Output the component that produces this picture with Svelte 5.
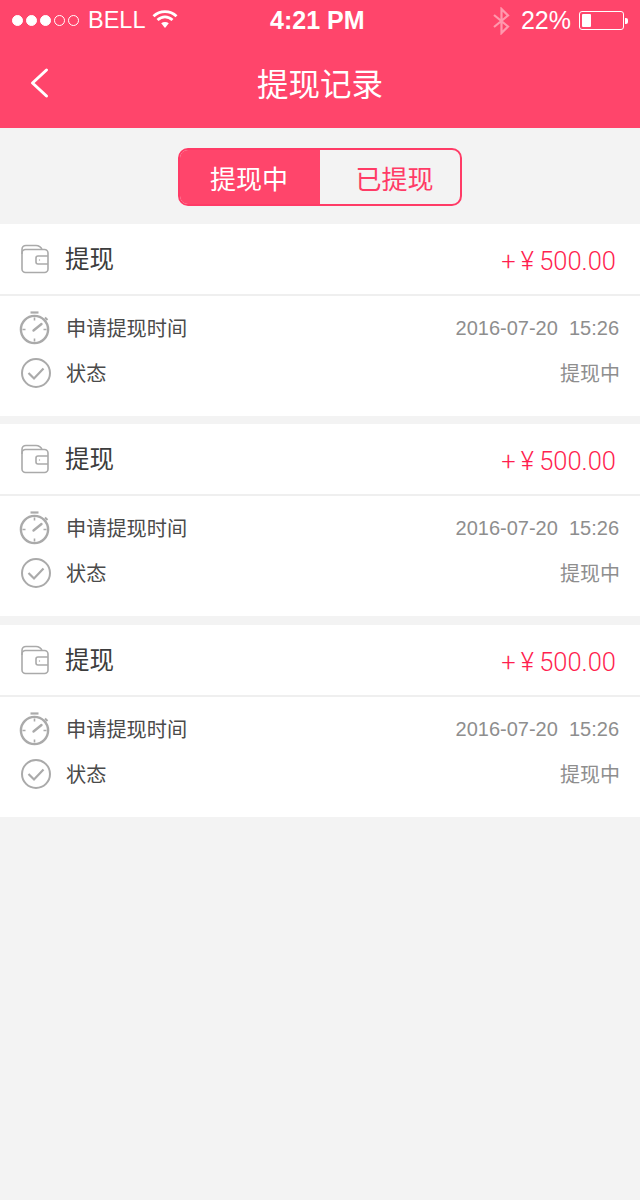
<script>
  const records = [
    { title: '提现', amount: '+ ¥ 500.00', time: '2016-07-20  15:26', status: '提现中' },
    { title: '提现', amount: '+ ¥ 500.00', time: '2016-07-20  15:26', status: '提现中' },
    { title: '提现', amount: '+ ¥ 500.00', time: '2016-07-20  15:26', status: '提现中' }
  ];
</script>

<div class="page">
  <header class="top">
    <div class="status">
      <div class="status-left">
        <span class="dots">
          <i class="on"></i><i class="on"></i><i class="on"></i><i></i><i></i>
        </span>
        <span class="carrier">BELL</span>
        <svg class="wifi" width="26" height="20" viewBox="0 0 26 20">
          <path d="M1.5 7.2C7.8 1 18.2 1 24.5 7.2" fill="none" stroke="#fff" stroke-width="2.8" />
          <path d="M5.5 11C10 6.8 16 6.8 20.5 11" fill="none" stroke="#fff" stroke-width="2.8" />
          <path d="M9.2 14.3C11.4 12.6 14.6 12.6 16.8 14.3L13 19Z" fill="#fff" />
        </svg>
      </div>
      <span class="clock">4:21 PM</span>
      <div class="status-right">
        <svg class="bt" width="18" height="28" viewBox="0 0 18 28">
          <path d="M2 8L16 19.5L9.5 26V2L16 8.5L2 20" fill="none" stroke="#fff" stroke-opacity=".45" stroke-width="2.2" />
        </svg>
        <span class="pct">22%</span>
        <span class="battery"><b></b></span>
        <span class="nub"></span>
      </div>
    </div>
    <div class="nav">
      <svg class="back" width="20" height="32" viewBox="0 0 20 32">
        <path d="M17.5 3L3.5 16L17.5 29" fill="none" stroke="#fff" stroke-width="3" stroke-linecap="round" stroke-linejoin="round" />
      </svg>
      <h1>提现记录</h1>
    </div>
  </header>

  <div class="tabs-wrap">
    <div class="tabs">
      <div class="tab active">提现中</div>
      <div class="tab">已提现</div>
    </div>
  </div>

  <div class="list">
    {#each records as r}
      <section class="card">
        <div class="card-head">
          <div class="head-left">
            <svg width="30" height="30" viewBox="0 0 30 30" fill="none" stroke="#aaa" stroke-width="1.6">
              <path d="M2 10V5.5C2 3 3.5 1.5 6 1.5H16C19 1.5 21 3 22 5.5" />
              <rect x="2" y="5.5" width="26" height="23" rx="3.5" />
              <path d="M28 12H18C16.8 12 16 12.8 16 14V18C16 19.2 16.8 20 18 20H28" />
              <circle cx="19.5" cy="16" r=".7" fill="#aaa" stroke="none" />
            </svg>
            <span class="title">{r.title}</span>
          </div>
          <span class="amount">{r.amount}</span>
        </div>
        <div class="card-body">
          <div class="row first">
            <div class="row-left">
              <svg width="32" height="34" viewBox="0 0 32 34" fill="none" stroke="#aaa">
                <circle cx="15.5" cy="18.5" r="13.6" stroke-width="2.4" />
                <path d="M11.5 1.5H19.5" stroke-width="2.2" />
                <path d="M26 6.5L28.5 9" stroke-width="2" />
                <path d="M15.5 6.5V9.5M15.5 27.5V30.5M3.5 18.5H6.5M24.5 18.5H27.5" stroke-width="1.6" />
                <path d="M14.5 19.5L22.5 13" stroke-width="2.4" stroke-linecap="round" />
              </svg>
              <span class="label">申请提现时间</span>
            </div>
            <span class="value date">{r.time}</span>
          </div>
          <div class="row">
            <div class="row-left">
              <svg class="check" width="32" height="32" viewBox="0 0 32 32" fill="none" stroke="#aaa" stroke-width="2">
                <circle cx="16" cy="16" r="14" />
                <path d="M8.5 16L14 21.5L23.5 11.5" stroke-width="2.2" />
              </svg>
              <span class="label">状态</span>
            </div>
            <span class="value">{r.status}</span>
          </div>
        </div>
      </section>
    {/each}
  </div>
</div>

<style>
  :global(body) {
    margin: 0;
    background: #f3f3f3;
  }
  .page {
    width: 640px;
    height: 1200px;
    overflow: hidden;
    background: #f3f3f3;
    font-family: "Liberation Sans", "Noto Sans CJK SC", sans-serif;
  }
  .top {
    height: 128px;
    background: #ff456b;
    color: #fff;
  }
  .status {
    height: 40px;
    box-sizing: border-box;
    padding-top: 1px;
    display: flex;
    align-items: center;
    justify-content: space-between;
    position: relative;
  }
  .status-left {
    display: flex;
    align-items: center;
    padding-left: 12px;
  }
  .dots {
    display: flex;
    gap: 3px;
  }
  .dots i {
    width: 11px;
    height: 11px;
    border: 1px solid #fff;
    border-radius: 50%;
    box-sizing: border-box;
  }
  .dots i.on {
    background: #fff;
  }
  .carrier {
    font-size: 23.5px;
    margin-left: 9px;
  }
  .wifi {
    margin-left: 6px;
    margin-top: -3px;
  }
  .clock {
    position: absolute;
    left: 270px;
    font-size: 25px;
    font-weight: bold;
  }
  .status-right {
    display: flex;
    align-items: center;
    padding-right: 12px;
  }
  .bt {
    margin-right: 11px;
  }
  .pct {
    font-size: 25px;
    margin-right: 8px;
  }
  .battery {
    width: 45px;
    height: 19px;
    border: 1px solid #fff;
    border-radius: 3px;
    padding: 2px;
    box-sizing: border-box;
    display: flex;
  }
  .battery b {
    width: 9px;
    background: #fff;
    border-radius: 1px;
  }
  .nub {
    width: 3px;
    height: 6px;
    margin-left: 1px;
    background: #fff;
    border-radius: 0 2px 2px 0;
  }
  .nav {
    height: 88px;
    position: relative;
    display: flex;
    align-items: center;
    justify-content: center;
  }
  .back {
    position: absolute;
    left: 29px;
    top: 27px;
  }
  .nav h1 {
    margin: 0 0 5px;
    font-size: 31.5px;
    font-weight: normal;
  }
  .tabs-wrap {
    display: flex;
    justify-content: center;
    padding: 20px 0 18px;
  }
  .tabs {
    width: 284px;
    height: 58px;
    box-sizing: border-box;
    border: 2px solid #ff3b66;
    border-radius: 10px;
    overflow: hidden;
    display: flex;
  }
  .tab {
    flex: 1;
    display: flex;
    align-items: center;
    justify-content: center;
    font-size: 26px;
    color: #ff3b66;
    padding-left: 9px;
  }
  .tab.active {
    flex: 0 0 140px;
    padding: 0 2px 0 0;
    box-sizing: border-box;
    background: #ff456b;
    color: #fff;
  }
  .list {
    display: flex;
    flex-direction: column;
    gap: 8px;
  }
  .card {
    height: 192px;
    background: #fff;
  }
  .card:last-child {
    margin-top: 1px;
  }
  .card-head {
    height: 70px;
    border-bottom: 2px solid #efefef;
    display: flex;
    align-items: center;
    justify-content: space-between;
    padding: 0 24px 0 20px;
  }
  .head-left,
  .row-left {
    display: flex;
    align-items: center;
  }
  .title {
    margin: 0 0 3px 15px;
    font-size: 24.5px;
    color: #3c3c3c;
  }
  .amount {
    font-family: Roboto, "Liberation Sans", sans-serif;
    font-size: 25.5px;
    font-weight: 300;
    word-spacing: -1px;
    color: #ff1f50;
    padding-top: 3px;
  }
  .card-body {
    padding: 15px 20px 0 19px;
  }
  .row {
    height: 40px;
    display: flex;
    align-items: center;
    justify-content: space-between;
  }
  .row.first {
    height: 34px;
    margin-bottom: 8px;
  }
  .label {
    margin: 0 0 2px 15px;
    font-size: 20.2px;
    color: #4a4a4a;
  }
  .check {
    margin-left: 1px;
  }
  .check + .label {
    margin-left: 14px;
  }
  .value {
    font-size: 20px;
    color: #8e8e8e;
    white-space: pre;
  }
  .date {
    margin-right: 1px;
  }
  .row:last-child .value {
    margin-bottom: 1px;
  }
</style>
